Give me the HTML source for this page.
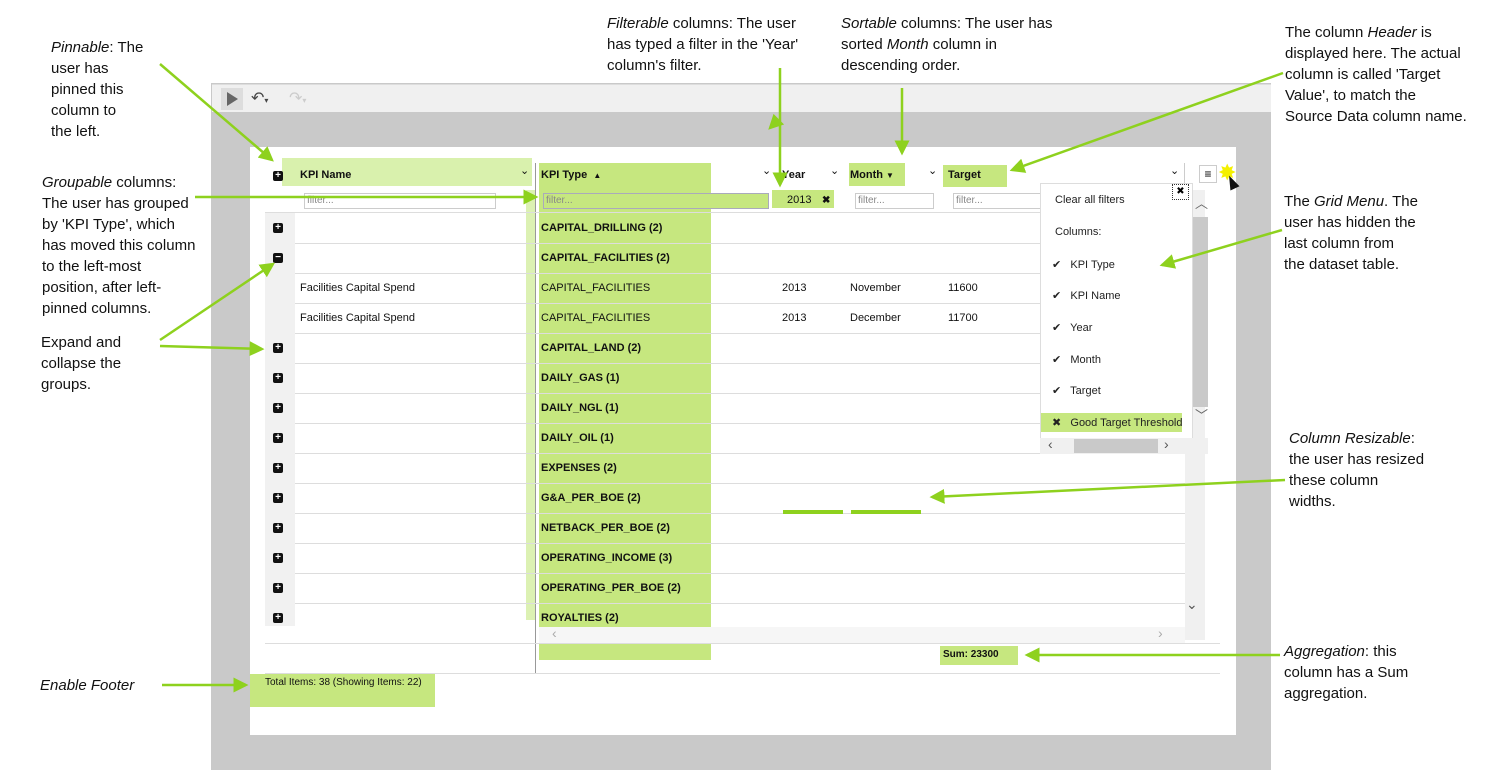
<!DOCTYPE html>
<html><head><meta charset="utf-8"><style>
body{margin:0;width:1498px;height:770px;position:relative;background:#fff;font-family:"Liberation Sans",sans-serif;overflow:hidden}
.a{position:absolute}
.ann{position:absolute;font-size:15px;line-height:21px;color:#111}
.cell{position:absolute;font-size:11px;color:#111}
.b{font-weight:bold}
.pm{position:absolute;left:273px;width:10px;height:10px;background:#111;border-radius:2px;color:#fff;font-size:10px;line-height:10px;text-align:center;font-weight:bold}
.row{position:absolute;left:295px;width:890px;height:1px;background:#ddd}
.flt{position:absolute;height:14px;border:1px solid #ccc;background:#fff;font-size:10px;color:#888;line-height:14px;padding-left:2px;box-sizing:content-box}
.mi{position:absolute;left:1055px;font-size:11px;color:#222}
</style></head><body>
<div class="a" style="left:211px;top:83px;width:1060px;height:687px;background:#c9c9c9"></div>
<div class="a" style="left:212px;top:84px;width:1059px;height:27px;background:#f0f0f0;border-top:1px solid #ddd"></div>
<div class="a" style="left:221px;top:88px;width:22px;height:22px;background:#ddd"></div>
<div class="a" style="left:227px;top:92px;width:0;height:0;border-left:11px solid #666;border-top:7px solid transparent;border-bottom:7px solid transparent"></div>
<div class="a" style="left:251px;top:88px;font-size:16px;color:#444">↶<span style="font-size:8px">▾</span></div>
<div class="a" style="left:289px;top:88px;font-size:16px;color:#ccc">↷<span style="font-size:8px">▾</span></div>
<div class="a" style="left:250px;top:147px;width:986px;height:588px;background:#fff"></div>

<div class="a" style="left:282px;top:158px;width:250px;height:28px;background:#d9f1ad"></div>
<div class="a" style="left:526px;top:190px;width:9px;height:430px;background:#dcf1b3"></div>
<div class="a" style="left:535px;top:163px;width:1px;height:510px;background:#999"></div>
<div class="a" style="left:539px;top:163px;width:172px;height:497px;background:#c6e77f"></div>
<div class="a" style="left:265px;top:213px;width:30px;height:413px;background:#f1f1f1"></div>
<div class="a" style="left:1185px;top:190px;width:20px;height:450px;background:#f0f0f0"></div>
<div class="a" style="left:1186px;top:596px;font-size:14px;color:#555">⌄</div>
<div class="a" style="left:539px;top:627px;width:646px;height:16px;background:#f6f6f6"></div>
<div class="a" style="left:552px;top:625px;font-size:14px;color:#aaa">‹</div>
<div class="a" style="left:1158px;top:625px;font-size:14px;color:#aaa">›</div>
<div class="a" style="left:265px;top:643px;width:955px;height:1px;background:#ddd"></div>
<div class="a" style="left:265px;top:673px;width:955px;height:1px;background:#ddd"></div>
<div class="a" style="left:940px;top:646px;width:78px;height:19px;background:#c6e77f"></div>
<div class="cell b" style="left:943px;top:649px;font-size:10px">Sum: 23300</div>
<div class="a" style="left:250px;top:674px;width:185px;height:33px;background:#c6e77f"></div>
<div class="cell" style="left:265px;top:677px;font-size:10px">Total Items: 38 (Showing Items: 22)</div>

<div class="pm" style="top:171px">+</div>
<div class="cell b" style="left:300px;top:169px">KPI Name</div>
<div class="cell" style="left:520px;top:164px">⌄</div>
<div class="cell b" style="left:541px;top:169px">KPI Type &nbsp;<span style="font-size:8px">▲</span></div>
<div class="cell" style="left:762px;top:164px">⌄</div>
<div class="cell b" style="left:782px;top:169px">Year</div>
<div class="cell" style="left:830px;top:164px">⌄</div>
<div class="a" style="left:849px;top:163px;width:56px;height:23px;background:#c6e77f"></div>
<div class="cell b" style="left:850px;top:169px">Month <span style="font-size:8px">▼</span></div>
<div class="cell" style="left:928px;top:164px">⌄</div>
<div class="a" style="left:943px;top:165px;width:64px;height:22px;background:#c6e77f"></div>
<div class="cell b" style="left:948px;top:169px">Target</div>
<div class="cell" style="left:1170px;top:164px">⌄</div>
<div class="a" style="left:1184px;top:163px;width:1px;height:22px;background:#ccc"></div>
<div class="a" style="left:1199px;top:165px;width:16px;height:16px;border:1px solid #ccc;background:#fff;font-size:12px;line-height:16px;text-align:center">≡</div>
<div class="a" style="left:1218px;top:160px;font-size:22px;color:#f4f000">✸</div>
<div class="a" style="left:1227px;top:175px;width:0;height:0;border-left:5px solid transparent;border-right:5px solid transparent;border-bottom:14px solid #111;transform:rotate(-25deg)"></div>

<div class="flt" style="left:304px;top:193px;width:188px">filter...</div>
<div class="flt" style="left:543px;top:193px;width:222px;background:#c6e77f;border-color:#aab">filter...</div>
<div class="a" style="left:772px;top:190px;width:62px;height:18px;background:#c6e77f"></div>
<div class="cell" style="left:787px;top:194px">2013</div>
<div class="cell b" style="left:822px;top:195px;font-size:10px">✖</div>
<div class="flt" style="left:855px;top:193px;width:75px">filter...</div>
<div class="flt" style="left:953px;top:193px;width:88px">filter...</div>
<div class="a" style="left:265px;top:212px;width:920px;height:1px;background:#ddd"></div>

<div class="row" style="top:243px"></div><div class="row" style="top:273px"></div><div class="row" style="top:303px"></div><div class="row" style="top:333px"></div><div class="row" style="top:363px"></div><div class="row" style="top:393px"></div><div class="row" style="top:423px"></div><div class="row" style="top:453px"></div><div class="row" style="top:483px"></div><div class="row" style="top:513px"></div><div class="row" style="top:543px"></div><div class="row" style="top:573px"></div><div class="row" style="top:603px"></div>
<div class="pm" style="top:223px">+</div><div class="cell b" style="left:541px;top:222px">CAPITAL_DRILLING (2)</div>
<div class="pm" style="top:253px">−</div><div class="cell b" style="left:541px;top:252px">CAPITAL_FACILITIES (2)</div>
<div class="cell" style="left:300px;top:282px">Facilities Capital Spend</div><div class="cell" style="left:541px;top:282px">CAPITAL_FACILITIES</div><div class="cell" style="left:782px;top:282px">2013</div><div class="cell" style="left:850px;top:282px">November</div><div class="cell" style="left:948px;top:282px">11600</div>
<div class="cell" style="left:300px;top:312px">Facilities Capital Spend</div><div class="cell" style="left:541px;top:312px">CAPITAL_FACILITIES</div><div class="cell" style="left:782px;top:312px">2013</div><div class="cell" style="left:850px;top:312px">December</div><div class="cell" style="left:948px;top:312px">11700</div>
<div class="pm" style="top:343px">+</div><div class="cell b" style="left:541px;top:342px">CAPITAL_LAND (2)</div>
<div class="pm" style="top:373px">+</div><div class="cell b" style="left:541px;top:372px">DAILY_GAS (1)</div>
<div class="pm" style="top:403px">+</div><div class="cell b" style="left:541px;top:402px">DAILY_NGL (1)</div>
<div class="pm" style="top:433px">+</div><div class="cell b" style="left:541px;top:432px">DAILY_OIL (1)</div>
<div class="pm" style="top:463px">+</div><div class="cell b" style="left:541px;top:462px">EXPENSES (2)</div>
<div class="pm" style="top:493px">+</div><div class="cell b" style="left:541px;top:492px">G&amp;A_PER_BOE (2)</div>
<div class="pm" style="top:523px">+</div><div class="cell b" style="left:541px;top:522px">NETBACK_PER_BOE (2)</div>
<div class="pm" style="top:553px">+</div><div class="cell b" style="left:541px;top:552px">OPERATING_INCOME (3)</div>
<div class="pm" style="top:583px">+</div><div class="cell b" style="left:541px;top:582px">OPERATING_PER_BOE (2)</div>
<div class="pm" style="top:613px">+</div><div class="cell b" style="left:541px;top:612px">ROYALTIES (2)</div>
<div class="a" style="left:783px;top:510px;width:60px;height:4px;background:#8ed11e"></div>
<div class="a" style="left:851px;top:510px;width:70px;height:4px;background:#8ed11e"></div>

<div class="a" style="left:1040px;top:183px;width:151px;height:254px;background:#fff;border:1px solid #ddd"></div>
<div class="a" style="left:1172px;top:184px;width:15px;height:14px;border:1px dotted #333;font-size:10px;text-align:center;line-height:14px">✖</div>
<div class="a" style="left:1193px;top:217px;width:15px;height:190px;background:#c9c9c9"></div>
<div class="a" style="left:1195px;top:193px;font-size:13px;color:#666">︿</div>
<div class="a" style="left:1195px;top:405px;font-size:13px;color:#666">﹀</div>
<div class="mi" style="top:194px">Clear all filters</div>
<div class="mi" style="top:226px">Columns:</div>
<div class="mi" style="left:1052px;top:258px">✔ &nbsp; KPI Type</div>
<div class="mi" style="left:1052px;top:289px">✔ &nbsp; KPI Name</div>
<div class="mi" style="left:1052px;top:321px">✔ &nbsp; Year</div>
<div class="mi" style="left:1052px;top:353px">✔ &nbsp; Month</div>
<div class="mi" style="left:1052px;top:384px">✔ &nbsp; Target</div>
<div class="a" style="left:1041px;top:413px;width:141px;height:19px;background:#c6e77f"></div>
<div class="mi" style="left:1052px;top:416px">✖ &nbsp; Good Target Threshold</div>
<div class="a" style="left:1040px;top:438px;width:168px;height:16px;background:#f0f0f0"></div>
<div class="a" style="left:1074px;top:439px;width:84px;height:14px;background:#c9c9c9"></div>
<div class="a" style="left:1048px;top:436px;font-size:14px;color:#555">‹</div>
<div class="a" style="left:1164px;top:436px;font-size:14px;color:#555">›</div>

<div class="ann" style="left:51px;top:37px"><i>Pinnable</i>: The<br>user has<br>pinned this<br>column to<br>the left.</div>
<div class="ann" style="left:42px;top:172px"><i>Groupable</i> columns:<br>The user has grouped<br>by 'KPI Type', which<br>has moved this column<br>to the left-most<br>position, after left-<br>pinned columns.</div>
<div class="ann" style="left:41px;top:332px">Expand and<br>collapse the<br>groups.</div>
<div class="ann" style="left:40px;top:675px"><i>Enable Footer</i></div>
<div class="ann" style="left:607px;top:13px"><i>Filterable</i> columns: The user<br>has typed a filter in the 'Year'<br>column's filter.</div>
<div class="ann" style="left:841px;top:13px"><i>Sortable</i> columns: The user has<br>sorted <i>Month</i> column in<br>descending order.</div>
<div class="ann" style="left:1285px;top:22px">The column <i>Header</i> is<br>displayed here. The actual<br>column is called 'Target<br>Value', to match the<br>Source Data column name.</div>
<div class="ann" style="left:1284px;top:191px">The <i>Grid Menu</i>. The<br>user has hidden the<br>last column from<br>the dataset table.</div>
<div class="ann" style="left:1289px;top:428px"><i>Column Resizable</i>:<br>the user has resized<br>these column<br>widths.</div>
<div class="ann" style="left:1284px;top:641px"><i>Aggregation</i>: this<br>column has a Sum<br>aggregation.</div>

<svg class="a" style="left:0;top:0" width="1498" height="770">
<defs><marker id="m" markerWidth="6" markerHeight="6" refX="5" refY="3" orient="auto" markerUnits="strokeWidth"><path d="M0,0 L6,3 L0,6 z" fill="#8ed11e"/></marker></defs>
<g stroke="#8ed11e" stroke-width="2.5" fill="none" marker-end="url(#m)">
<line x1="160" y1="64" x2="272" y2="160"/>
<line x1="195" y1="197" x2="536" y2="197"/>
<line x1="160" y1="340" x2="273" y2="264"/>
<line x1="160" y1="346" x2="262" y2="349"/>
<line x1="780" y1="68" x2="780" y2="185"/>
<line x1="776" y1="122" x2="770" y2="128"/>
<line x1="902" y1="88" x2="902" y2="153"/>
<line x1="1283" y1="73" x2="1012" y2="170"/>
<line x1="1282" y1="230" x2="1162" y2="265"/>
<line x1="1285" y1="480" x2="932" y2="497"/>
<line x1="1280" y1="655" x2="1027" y2="655"/>
<line x1="162" y1="685" x2="246" y2="685"/>
</g></svg>
</body></html>
